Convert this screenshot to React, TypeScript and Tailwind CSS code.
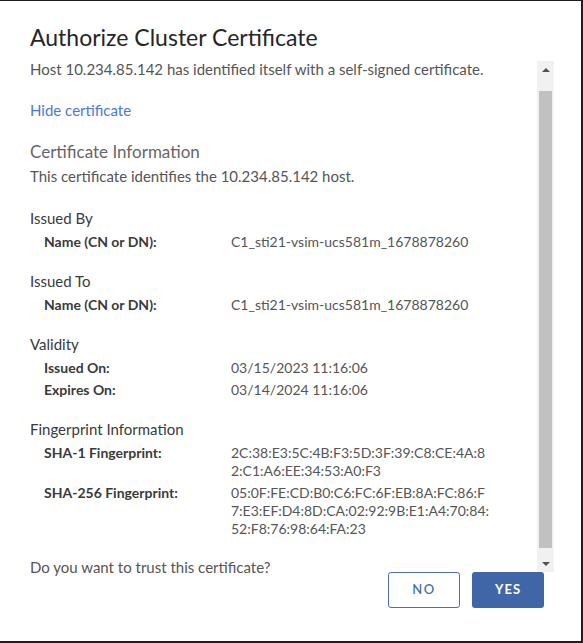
import React from "react";

type Row = { label: string; lines: string[] };

const font = { fontFamily: "Lato, 'Open Sans', sans-serif" };

function Section({ title, rows, first }: { title: string; rows: Row[]; first?: boolean }) {
  return (
    <div className={first ? "mt-[22px]" : "mt-[20px]"}>
      <div className="text-[15px] leading-[20px] text-[#3a3a3a]">{title}</div>
      <div className="mt-[5px] flex flex-col gap-[4px]">
        {rows.map((r) => (
          <div key={r.label} className="flex pl-[14px] text-[14px] leading-[18px]">
            <div className="w-[187px] shrink-0 font-bold text-[#3a3a3a]">{r.label}</div>
            <div className="text-[#555]">
              {r.lines.map((l) => (
                <div key={l}>{l}</div>
              ))}
            </div>
          </div>
        ))}
      </div>
    </div>
  );
}

function Scrollbar() {
  return (
    <div className="mt-[2px] flex h-[511px] w-[17px] shrink-0 flex-col bg-[#f1f1f1]">
      <div className="flex h-[17px] items-center justify-center">
        <div className="h-0 w-0 border-x-[4px] border-b-[4px] border-x-transparent border-b-[#505050]" />
      </div>
      <div className="mx-[2px] mt-[13px] h-[457px] bg-[#c1c1c1]" />
      <div className="mt-[7px] flex h-[17px] items-center justify-center">
        <div className="h-0 w-0 border-x-[4px] border-t-[4px] border-x-transparent border-t-[#505050]" />
      </div>
    </div>
  );
}

export default function App() {
  return (
    <div className="h-[643px] w-[583px] bg-[#1e1e1e] pt-px pr-[2px] pb-[2px]" style={font}>
      <div className="flex h-full flex-col bg-white pl-[30px] pr-[27px] pt-[21px]">
        <h1 className="text-[23px] leading-[30px] text-[#262626]">Authorize Cluster Certificate</h1>

        <div className="mt-[7px] flex h-[512px] items-start">
          <div className="flex-1 text-[15px] leading-[20px] text-[#555]">
            <p>Host 10.234.85.142 has identified itself with a self-signed certificate.</p>
            <a className="mt-[21px] block text-[#4a78d6]">Hide certificate</a>

            <div className="mt-[21px] text-[17px] leading-[22px] text-[#666]">Certificate Information</div>
            <p className="mt-[3px]">This certificate identifies the 10.234.85.142 host.</p>

            <Section first title="Issued By" rows={[{ label: "Name (CN or DN):", lines: ["C1_sti21-vsim-ucs581m_1678878260"] }]} />
            <Section title="Issued To" rows={[{ label: "Name (CN or DN):", lines: ["C1_sti21-vsim-ucs581m_1678878260"] }]} />
            <Section
              title="Validity"
              rows={[
                { label: "Issued On:", lines: ["03/15/2023 11:16:06"] },
                { label: "Expires On:", lines: ["03/14/2024 11:16:06"] },
              ]}
            />
            <Section
              title="Fingerprint Information"
              rows={[
                { label: "SHA-1 Fingerprint:", lines: ["2C:38:E3:5C:4B:F3:5D:3F:39:C8:CE:4A:8", "2:C1:A6:EE:34:53:A0:F3"] },
                {
                  label: "SHA-256 Fingerprint:",
                  lines: ["05:0F:FE:CD:B0:C6:FC:6F:EB:8A:FC:86:F", "7:E3:EF:D4:8D:CA:02:92:9B:E1:A4:70:84:", "52:F8:76:98:64:FA:23"],
                },
              ]}
            />

            <p className="mt-[19px]">Do you want to trust this certificate?</p>
          </div>
          <Scrollbar />
        </div>

        <div className="mt-px flex justify-end gap-[12px] pr-[10px]">
          <button className="h-[36px] w-[72px] rounded-[3px] border border-[#4a6fb0] bg-white text-[13px] font-semibold tracking-[0.12em] text-[#4a6fb0]">
            NO
          </button>
          <button className="h-[36px] w-[72px] rounded-[3px] bg-[#4166a8] text-[13px] font-bold tracking-[0.08em] text-white">
            YES
          </button>
        </div>
      </div>
    </div>
  );
}
